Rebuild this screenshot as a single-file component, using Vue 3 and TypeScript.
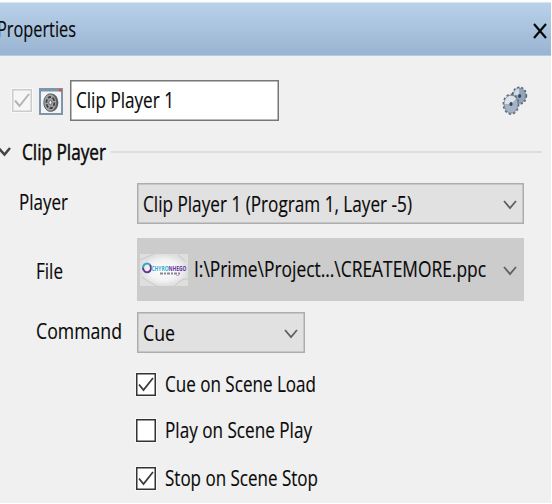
<script setup lang="ts">
import { h, ref, type FunctionalComponent } from 'vue'

// Single-line label condensed to a fixed width.
const FitText: FunctionalComponent<{ text: string; width: number }> = (props) =>
  h('svg', { width: props.width, height: 30, class: 'fit' }, [
    h('text', { x: 0, y: 23, textLength: props.width, lengthAdjust: 'spacingAndGlyphs' }, props.text),
  ])
FitText.props = ['text', 'width']

const options = ref([
  { text: 'Cue on Scene Load', width: 151, on: true },
  { text: 'Play on Scene Play', width: 147, on: false },
  { text: 'Stop on Scene Stop', width: 153, on: true },
])
</script>

<template>
  <main class="panel">
    <header class="titlebar">
      <FitText text="Properties" :width="79" />
      <svg class="close" width="14" height="16" viewBox="0 0 14 16"><path d="M1 1 13 15M13 1 1 15" /></svg>
    </header>

    <section class="identity">
      <span class="box disabled"><svg width="20" height="23" viewBox="0 0 20 23"><path d="M3 11.5 7.5 17 17 5" /></svg></span>
      <svg class="clip-icon" width="24" height="27" viewBox="0 0 24 27">
        <rect x="1" y="1" width="22" height="25" fill="#f1f5f8" stroke="#8096a8" stroke-width="2" />
        <path d="M1 2H23" stroke="#8096a8" stroke-width="3" />
        <path d="M20 2.2H23" stroke="#ef4a32" stroke-width="2.4" />
        <ellipse cx="13.2" cy="14.6" rx="6.2" ry="8.8" fill="#5e6164" />
        <ellipse cx="11.2" cy="14.6" rx="6.4" ry="8.8" fill="#a0a4a6" stroke="#5c6063" stroke-width="1" />
        <ellipse cx="11.4" cy="14.6" rx="4" ry="5.6" fill="none" stroke="#3e4245" stroke-width="1.8" stroke-dasharray="3.4 1.5" />
        <ellipse cx="11.4" cy="14.6" rx="1.6" ry="2.2" fill="#e2e3e4" stroke="#555" stroke-width=".8" />
      </svg>
      <div class="name"><FitText text="Clip Player 1" :width="98" /></div>
      <svg class="gears" width="26" height="30" viewBox="0 0 26 30">
        <g fill="none" stroke-width="2.4" stroke-dasharray="2.2 1.8">
          <ellipse cx="17.4" cy="9.6" rx="6.6" ry="8" stroke="#5b6c7b" />
        </g>
        <ellipse cx="17.4" cy="9.6" rx="6.2" ry="7.6" fill="#93a5b8" stroke="#6d7f90" stroke-width=".8" />
        <path d="M11.8 9Q12 3 17 2.6L17.4 9Z" fill="#d0dae3" />
        <ellipse cx="17.6" cy="10" rx="1.5" ry="1.9" fill="#344554" />
        <ellipse cx="9" cy="18.2" rx="7.2" ry="9.4" fill="none" stroke="#5b6c7b" stroke-width="2.4" stroke-dasharray="2.4 1.9" />
        <ellipse cx="9" cy="18.2" rx="6.9" ry="9" fill="#a3b3c5" stroke="#76889a" stroke-width=".8" />
        <path d="M2.5 18Q2.6 10 9 9.8Q13 10 14 13L9 18Z" fill="#dce4ea" />
        <ellipse cx="9" cy="18" rx="1.6" ry="2.1" fill="#344554" />
      </svg>
    </section>

    <section class="heading">
      <svg class="expander" width="11" height="12" viewBox="0 0 11 12"><path d="M-1 2.5 4.5 8.5 10 2" /></svg>
      <FitText class="strong" text="Clip Player" :width="84" />
      <i class="rule"></i>
    </section>

    <section class="fields">
      <div class="row player">
        <label class="label outer up"><FitText text="Player" :width="49" /></label>
        <div class="select">
          <FitText text="Clip Player 1 (Program 1, Layer -5)" :width="269" />
          <svg class="chevron" width="14" height="12" viewBox="0 0 14 12"><path d="M1 2 7 9 13 2" /></svg>
        </div>
      </div>
      <div class="row file">
        <label class="label down"><FitText text="File" :width="27" /></label>
        <div class="select picker">
          <svg class="thumb" width="48" height="32" viewBox="0 0 48 32">
            <defs>
              <radialGradient id="glow"><stop offset="0" stop-color="#fff" /><stop offset=".65" stop-color="#f3f3f3" /><stop offset="1" stop-color="#dedede" /></radialGradient>
            </defs>
            <rect width="48" height="32" fill="url(#glow)" />
            <path d="M0 6Q9 2 14 0M35 32Q41 24 48 25M2 23Q10 29 17 32M38 1 45 7" fill="none" stroke="#c8c8c8" />
            <path d="M3 14A4 4.4 0 0 1 10 11" fill="none" stroke="#30a5c6" stroke-width="2" />
            <path d="M10 11A4 4.4 0 1 1 3 14" fill="none" stroke="#653594" stroke-width="2" />
            <text class="brand" x="11.5" y="16.5" textLength="35" lengthAdjust="spacingAndGlyphs" fill="#35afd0">CHYRO<tspan fill="#65369b">NHEGO</tspan></text>
            <path d="M20 19.5H41" stroke="#8b8491" stroke-width="2" stroke-dasharray="3 1 2 1" />
            <path d="M36 21.5H39" stroke="#df9de3" />
          </svg>
          <FitText text="I:\Prime\Project...\CREATEMORE.ppc" :width="292" />
          <svg class="chevron" width="14" height="12" viewBox="0 0 14 12"><path d="M1 2 7 9 13 2" /></svg>
        </div>
      </div>
      <div class="row command">
        <label class="label up"><FitText text="Command" :width="86" /></label>
        <div class="select short">
          <FitText text="Cue" :width="32" />
          <svg class="chevron" width="14" height="12" viewBox="0 0 14 12"><path d="M1 2 7 9 13 2" /></svg>
        </div>
      </div>
    </section>

    <section class="options">
      <div v-for="o in options" :key="o.text" class="option" @click="o.on = !o.on">
        <span class="box"><svg v-if="o.on" width="20" height="23" viewBox="0 0 20 23"><path d="M3 11.5 7.5 17 17 5" /></svg></span>
        <FitText :text="o.text" :width="o.width" />
      </div>
    </section>
  </main>
</template>

<style>
body { background: #fff; }
</style>

<style scoped>
.panel {
  box-sizing: border-box;
  width: 551px;
  height: 503px;
  border-top: 2px solid #fdfdfd;
  background: #f0f0f0;
  overflow: hidden;
  font-family: "Open Sans", "Noto Sans", sans-serif;
  font-size: 21.5px;
}
svg { display: block; flex: none; }
.fit { overflow: visible; fill: #080808; stroke: #080808; stroke-width: .15px; }
.fit.strong { stroke-width: .5px; }
.titlebar {
  box-sizing: border-box;
  height: 54px;
  display: flex;
  align-items: center;
  justify-content: space-between;
  padding: 0 4px 1px 0;
  border-top: 1px solid #d9e5f1;
  border-bottom: 1px solid #b6cbe1;
  background: linear-gradient(#b9d1ea, #99b4d1);
}
.titlebar .fit { margin-left: -3px; }
.close { margin-top: 4px; fill: none; stroke: #080808; stroke-width: 2.2; }
.identity { display: flex; align-items: center; height: 41px; padding: 24px 23px 0 12px; }
.box {
  box-sizing: border-box;
  flex: none;
  width: 20px;
  height: 23px;
  border: 1px solid #333;
  outline: 1px solid #f8f8f8;
  background: #fff;
  box-shadow: inset 0 0 0 .5px #333;
}
.box svg { margin: -1px; fill: none; stroke: #3b3b3b; stroke-width: 1.8; }
.box.disabled { border-color: #ccc; box-shadow: inset 0 0 0 .5px #ccc; background: #f6f6f6; }
.box.disabled svg { stroke: #b4b4b4; stroke-width: 2; }
.clip-icon { margin: 1px 7px 0; }
.name {
  box-sizing: border-box;
  width: 209px;
  height: 41px;
  display: flex;
  align-items: center;
  padding: 0 0 2px 5px;
  border: 1px solid #777;
  box-shadow: inset 0 0 0 .5px #777;
  background: #fff;
}
.gears { margin-left: auto; }
.heading { display: flex; align-items: center; height: 30px; margin-top: 16px; }
.expander { margin-right: 11px; fill: none; stroke: #444; stroke-width: 2.5; }
.rule { width: 431px; height: 2px; margin-left: 5px; background: #dedede; }
.fields { display: grid; row-gap: 0; margin-top: 16px; }
.row { display: grid; grid-template-columns: 137px 387px; }
.player { height: 41px; margin-bottom: 14px; }
.file { height: 63px; margin-bottom: 11px; }
.command { height: 41px; }
.label { display: flex; align-items: center; padding-left: 36px; }
.label.outer { padding-left: 19px; }
.label.up { padding-bottom: 4px; }
.label.down { padding-top: 2px; }
.select {
  box-sizing: border-box;
  display: flex;
  align-items: center;
  padding: 0 6px 0 5px;
  border: 1px solid #adadad;
  box-shadow: inset 0 0 0 .5px #adadad;
  background: #e1e1e1;
}
.select.short { width: 168px; }
.select.picker { padding: 0 7px 2px 3px; border: 0; box-shadow: none; background: #ccc; }
.picker .fit { margin-left: 6px; }
.thumb { margin-top: 2px; }
.brand { font: bold 7.5px "Open Sans", sans-serif; }
.chevron { margin: 2px 0 0 auto; fill: none; stroke: #606060; stroke-width: 1.8; }
.picker .chevron { margin-top: 4px; }
.options { display: grid; grid-template-rows: 46px 48px 46px; padding: 8px 0 0 136px; }
.option { display: flex; align-items: center; height: 46px; gap: 9px; }
</style>
